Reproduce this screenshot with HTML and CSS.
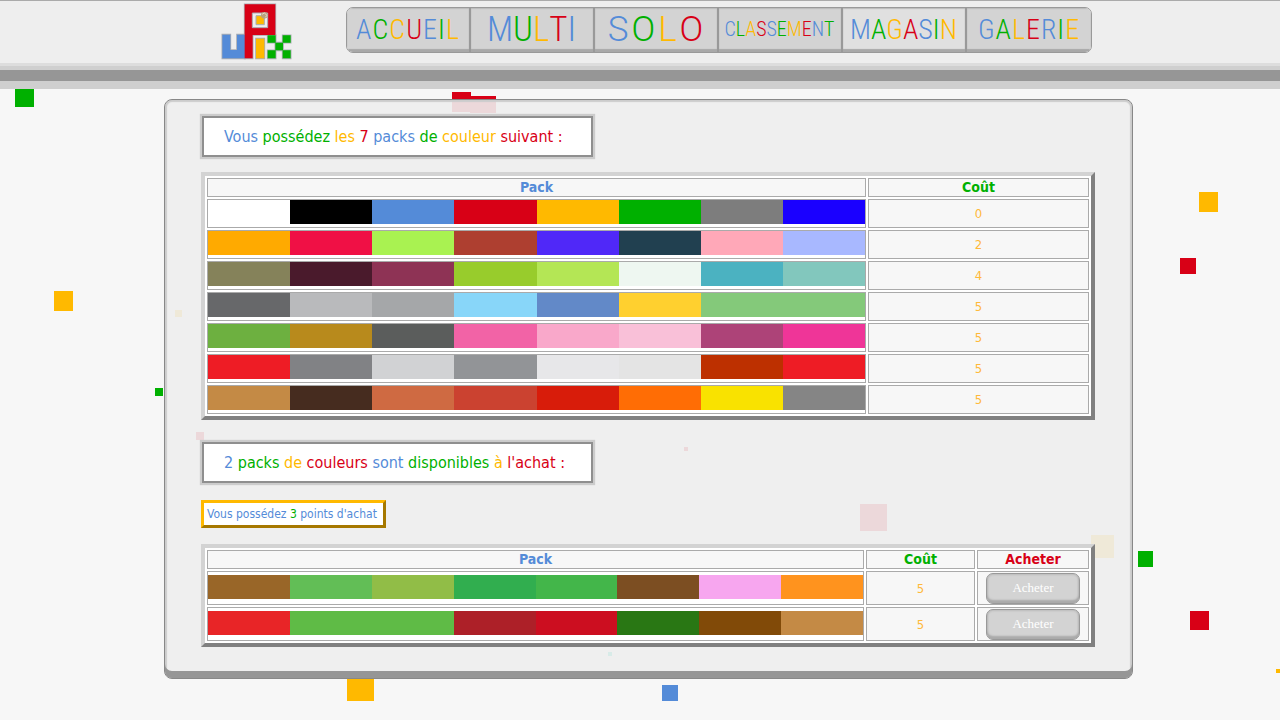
FILE: index.html
```html
<!DOCTYPE html>
<html lang="fr">
<head>
<meta charset="utf-8">
<title>uPix - Magasin</title>
<link rel="stylesheet" href="styles.css">
</head>
<body>
<svg class="confetti" width="1280" height="720" aria-hidden="true">
  <g fill="#00b000"><rect x="15" y="88" width="19" height="19"/><rect x="155" y="388" width="8" height="8"/><rect x="1138" y="551" width="15" height="16"/></g>
  <g fill="#d80016"><rect x="452" y="92" width="19" height="20"/><rect x="470" y="96" width="26" height="17"/><rect x="1180" y="258" width="16" height="16"/><rect x="196" y="432" width="8" height="8"/><rect x="684" y="447" width="4" height="4"/><rect x="860" y="504" width="27" height="27"/><rect x="1190" y="611" width="19" height="19"/></g>
  <g fill="#ffb900"><rect x="1199" y="192" width="19" height="20"/><rect x="54" y="291" width="19" height="20"/><rect x="175" y="310" width="7" height="7"/><rect x="1091" y="535" width="23" height="23"/><rect x="347" y="674" width="27" height="27"/><rect x="1276" y="669" width="4" height="4"/></g>
  <rect x="662" y="685" width="16" height="16" fill="#548bd8"/><rect x="608" y="652" width="4" height="4" fill="#00d2b1"/>
</svg>

<header class="header">
  <div class="bar">
    <a class="logo" href="#" aria-label="uPix">
      <svg viewBox="33 8 213 171" width="71" height="57" aria-hidden="true">
        <g fill="#a9adb3" stroke="#a9adb3" stroke-width="5"><path d="M37 103h24v46h20v-46h24v71H37z"/><path d="M104 12h92v92h-68v70h-24z"/><path d="M138 115h25v59h-25zM173 105h24v22h-24zM218 105h24v22h-24zM196 127h23v23h-23zM173 150h24v24h-24zM218 150h24v24h-24z"/></g>
        <path fill="#548bd8" d="M37 103h24v46h20v-46h24v71H37z"/>
        <path fill="#d80016" d="M104 12h92v92h-68v70h-24z"/>
        <path fill="#eee" stroke="#a9adb3" stroke-width="3" d="M127 38h46v44h-46z"/>
        <path fill="#ffb900" stroke="#a9adb3" stroke-width="3" d="M138 46h25v27h-25z"/>
        <circle cx="163" cy="45" r="10" fill="#b9a27e"/><path d="M156 42l7-4 8 7-5 6" fill="none" stroke="#e3dccb" stroke-width="3"/>
        <path fill="#ffb900" d="M138 115h25v59h-25z"/>
        <path fill="#00b000" d="M173 105h24v22h-24zM218 105h24v22h-24zM196 127h23v23h-23zM173 150h24v24h-24zM218 150h24v24h-24z"/>
      </svg>
    </a>
    <nav class="nav">
      <a href="#" class="size-m airy"><span class="b">A</span><span class="g">C</span><span class="o">C</span><span class="r">U</span><span class="b">E</span><span class="g">I</span><span class="o">L</span></a>
      <a href="#" class="size-l"><span class="b">M</span><span class="g">U</span><span class="o">L</span><span class="r">T</span><span class="b">I</span></a>
      <a href="#" class="size-l wide"><span class="b">S</span><span class="g">O</span><span class="o">L</span><span class="r">O</span></a>
      <a href="#" class="size-s"><span class="b">C</span><span class="g">L</span><span class="o">A</span><span class="r">S</span><span class="b">S</span><span class="g">E</span><span class="o">M</span><span class="r">E</span><span class="b">N</span><span class="g">T</span></a>
      <a href="#" class="size-m active"><span class="b">M</span><span class="g">A</span><span class="o">G</span><span class="r">A</span><span class="b">S</span><span class="g">I</span><span class="o">N</span></a>
      <a href="#" class="size-m airy"><span class="b">G</span><span class="g">A</span><span class="o">L</span><span class="r">E</span><span class="b">R</span><span class="g">I</span><span class="o">E</span></a>
    </nav>
  </div>
  <div class="rail"></div>
</header>

<main class="panel">
  <h1 class="title"><span class="b">Vous</span> <span class="g">possédez</span> <span class="o">les</span> <span class="r">7</span> <span class="b">packs</span> <span class="g">de</span> <span class="o">couleur</span> <span class="r">suivant :</span></h1>
  <table class="packs owned">
    <thead><tr><th class="b">Pack</th><th class="g cost">Coût</th></tr></thead>
    <tbody>
      <tr><td><div class="swatches"><i style="background:#fff"></i><i style="background:#000"></i><i style="background:#548bd8"></i><i style="background:#d80016"></i><i style="background:#ffb900"></i><i style="background:#00b000"></i><i style="background:#7d7d7d"></i><i style="background:#1a00ff"></i></div></td><td>0</td></tr>
      <tr><td><div class="swatches"><i style="background:#ffaa00"></i><i style="background:#f01045"></i><i style="background:#a9f251"></i><i style="background:#ae3f30"></i><i style="background:#5028f8"></i><i style="background:#214050"></i><i style="background:#ffa8b8"></i><i style="background:#a8b8ff"></i></div></td><td>2</td></tr>
      <tr><td><div class="swatches"><i style="background:#85825a"></i><i style="background:#4a1a2c"></i><i style="background:#8e3355"></i><i style="background:#98cc2c"></i><i style="background:#b4e655"></i><i style="background:#eef7f1"></i><i style="background:#4bb2c1"></i><i style="background:#82c7bd"></i></div></td><td>4</td></tr>
      <tr><td><div class="swatches"><i style="background:#67686a"></i><i style="background:#b9babc"></i><i style="background:#a5a7a9"></i><i style="background:#88d6f9"></i><i style="background:#6289c8"></i><i style="background:#ffd02f"></i><i style="background:#84c97a"></i><i style="background:#84c97a"></i></div></td><td>5</td></tr>
      <tr><td><div class="swatches"><i style="background:#6db040"></i><i style="background:#b88a1c"></i><i style="background:#5b5d5c"></i><i style="background:#f263a6"></i><i style="background:#f9a8ca"></i><i style="background:#f9c0d8"></i><i style="background:#ad4378"></i><i style="background:#ef3598"></i></div></td><td>5</td></tr>
      <tr><td><div class="swatches"><i style="background:#ee1c25"></i><i style="background:#818285"></i><i style="background:#d1d2d4"></i><i style="background:#929497"></i><i style="background:#e7e7e9"></i><i style="background:#e4e4e4"></i><i style="background:#bd3000"></i><i style="background:#ee1c25"></i></div></td><td>5</td></tr>
      <tr><td><div class="swatches"><i style="background:#c48a45"></i><i style="background:#462c1f"></i><i style="background:#cf6a42"></i><i style="background:#cb4230"></i><i style="background:#d81c0a"></i><i style="background:#ff6d05"></i><i style="background:#f9e200"></i><i style="background:#858585"></i></div></td><td>5</td></tr>
    </tbody>
  </table>

  <h2 class="title"><span class="b">2</span> <span class="g">packs</span> <span class="o">de</span> <span class="r">couleurs</span> <span class="b">sont</span> <span class="g">disponibles</span> <span class="o">à</span> <span class="r">l'achat :</span></h2>
  <p class="points">Vous possédez <span class="g">3</span> points d'achat</p>
  <table class="packs shop">
    <thead><tr><th class="b">Pack</th><th class="g cost">Coût</th><th class="r buy">Acheter</th></tr></thead>
    <tbody>
      <tr><td><div class="swatches"><i style="background:#996628"></i><i style="background:#62be56"></i><i style="background:#91bd47"></i><i style="background:#31ae4f"></i><i style="background:#43b64a"></i><i style="background:#7c4e22"></i><i style="background:#f7a6ef"></i><i style="background:#ff931e"></i></div></td><td>5</td><td><button type="button">Acheter</button></td></tr>
      <tr><td><div class="swatches"><i style="background:#e82527"></i><i style="background:#5fbb46"></i><i style="background:#5fbb46"></i><i style="background:#ad2028"></i><i style="background:#cc0e20"></i><i style="background:#297714"></i><i style="background:#814a08"></i><i style="background:#c48a45"></i></div></td><td>5</td><td><button type="button">Acheter</button></td></tr>
    </tbody>
  </table>
</main>
</body>
</html>
```
FILE: styles.css
```css
* { box-sizing: border-box; }

body {
  margin: 0;
  background: #f7f7f7;
  font-family: "DejaVu Sans Condensed", "Noto Sans", sans-serif;
  overflow-x: hidden;
}

.b { color: #548bd8; }
.g { color: #00b000; }
.o { color: #ffb900; }
.r { color: #d80016; }

.confetti {
  position: absolute;
  top: 0;
  left: 0;
  z-index: -1;
}

.header {
  border-top: 1px solid #aaa;
  background: #eee;
}

.bar {
  display: flex;
  justify-content: center;
  gap: 54px;
  padding: 2px 0 3px 32px;
}

.logo svg { display: block; }

.nav {
  display: flex;
  height: 46px;
  margin-top: 4px;
  border: 1px solid #999;
  border-radius: 7px;
  overflow: hidden;
}

.nav a {
  display: flex;
  align-items: center;
  justify-content: center;
  width: 124px;
  padding-bottom: 2px;
  background: #d3d3d3;
  box-shadow: inset 0 -3px 1px #a8a8a8, inset 0 1px 1px #bbb;
  border-right: 2px solid #999;
  font-family: "Roboto Condensed", Roboto, sans-serif;
  font-weight: 300;
  text-decoration: none;
}

.nav a:last-child { border-right: 0; }
.nav a.active, .nav a:hover { background: #e0e0e0; }
.nav .size-s { font-size: 20px; }
.nav .size-m { font-size: 28px; }
.nav .size-l { font-size: 35px; }
.nav .airy { gap: 1px; }
.nav .wide { gap: 3px; font-family: Roboto, sans-serif; }

.rail {
  height: 26px;
  border-top: 3px solid #ddd;
  background: linear-gradient(#cfcfcf 4px, #969696 4px, #969696 15px, #cfcfcf 15px);
}

.panel {
  margin: 10px 147px 40px 164px;
  padding: 16px 37px 31px 36px;
  border: 1px solid #888;
  border-radius: 8px;
  background: rgba(237, 237, 237, .91);
  box-shadow: inset 0 -7px 0 #969696, inset 0 0 1px 2px #ccc;
}

.title {
  width: fit-content;
  min-width: 391px;
  margin: 0 0 15px 1px;
  padding: 0 20px;
  border: 2px solid #8f8f8f;
  background: #fff;
  box-shadow: 0 0 1px 2px #ccc;
  font-size: 16px;
  font-weight: 400;
  line-height: 37px;
}

h2.title { margin-bottom: 17px; }

.packs {
  width: 100%;
  border: 4px solid;
  border-color: #d3d3d3 #808080 #808080 #d3d3d3;
  border-spacing: 2px;
  background: #fff;
  table-layout: fixed;
}

.owned { margin-bottom: 22px; }

.packs th, .packs td {
  padding: 0;
  border: 1px solid #aaa;
  background: #f7f7f7;
  text-align: center;
}

.packs th {
  height: 19px;
  font-size: 14px;
  line-height: 17px;
}

.packs td {
  height: 29px;
  color: #ffb93a;
  font-size: 13px;
}

.packs td:first-child { background: #fff; vertical-align: top; }
.owned .cost { width: 221px; }
.shop .cost { width: 109px; }
.shop .buy { width: 112px; }
.shop td { height: 34px; }
.shop td:first-child { padding-top: 3px; }

.swatches { display: flex; height: 24px; }
.swatches i { flex: 1; }

.packs button {
  display: block;
  width: 94px;
  height: 31px;
  margin: 0 auto;
  padding: 0;
  border: 1px solid #999;
  border-radius: 7px;
  background: #d3d3d3;
  box-shadow: inset 0 -3px 2px #aaa, inset 0 0 2px 1px #bbb;
  color: #fff;
  font: 13px "Liberation Serif", serif;
}

.points {
  width: fit-content;
  min-width: 185px;
  margin: 0 0 16px;
  padding: 0 3px;
  border: 3px solid;
  border-color: #ffb900 #a67800 #a67800 #ffb900;
  background: #fff;
  color: #548bd8;
  font-size: 12px;
  line-height: 22px;
}
```
